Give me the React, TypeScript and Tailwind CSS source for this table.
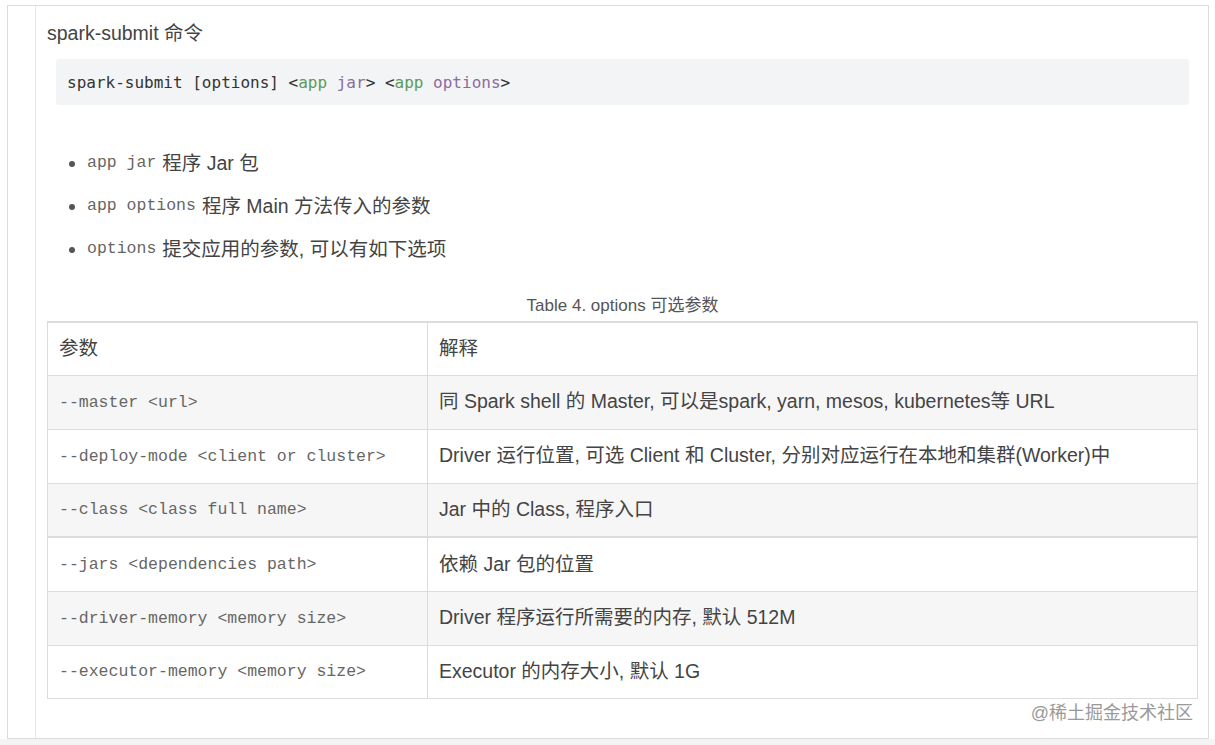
import React from "react";

const sans = "font-['Liberation_Sans','Noto_Sans_CJK_SC',sans-serif]";
const mono = "font-['Liberation_Mono','Noto_Sans_CJK_SC',monospace]";

const rows: [string, string][] = [
  ["--master <url>", "同 Spark shell 的 Master, 可以是spark, yarn, mesos, kubernetes等 URL"],
  ["--deploy-mode <client or cluster>", "Driver 运行位置, 可选 Client 和 Cluster, 分别对应运行在本地和集群(Worker)中"],
  ["--class <class full name>", "Jar 中的 Class, 程序入口"],
  ["--jars <dependencies path>", "依赖 Jar 包的位置"],
  ["--driver-memory <memory size>", "Driver 程序运行所需要的内存, 默认 512M"],
  ["--executor-memory <memory size>", "Executor 的内存大小, 默认 1G"],
];

function Bullet({ code, text }: { code: string; text: string }) {
  return (
    <li className="flex items-center h-[43px]">
      <span className="w-[6px] h-[6px] rounded-full bg-[#555] ml-[22px] mr-[12px]" />
      <span className={`${mono} text-[16.5px] text-[#666]`}>{code}</span>
      <span className="ml-[6px] text-[19.5px] text-[#444]">{text}</span>
    </li>
  );
}

export default function App() {
  return (
    <div className={`w-[1215px] h-[745px] bg-white flex flex-col ${sans}`}>
      <div className="pt-[5px] pl-[7px] pr-[6px]">
        <div className="border border-[#dcdcdc] h-[734px] flex relative">
          <div className="w-[28px] border-r border-[#e6e6e6]" />
          <div className="flex-1 pl-[11px] pr-[10px] pt-[13px]">
            <div className="text-[19.5px] leading-[28px] text-[#444]">spark-submit 命令</div>
            <div className="mt-[12px] ml-[9px] mr-[9px] h-[46px] rounded-[3px] bg-[#f3f4f5] flex items-center pl-[11px] pt-[1px]">
              <span className="font-['DejaVu_Sans_Mono',monospace] text-[16px] text-[#333]">
                spark-submit [options] &lt;<span className="text-[#5b9a5b]">app</span>{" "}
                <span className="text-[#8b6d9c]">jar</span>&gt; &lt;<span className="text-[#5b9a5b]">app</span>{" "}
                <span className="text-[#8b6d9c]">options</span>&gt;
              </span>
            </div>
            <ul className="mt-[37px]">
              <Bullet code="app jar" text="程序 Jar 包" />
              <Bullet code="app options" text="程序 Main 方法传入的参数" />
              <Bullet code="options" text="提交应用的参数, 可以有如下选项" />
            </ul>
            <div className="mt-[23px] h-[24px] leading-[24px] text-center text-[17px] text-[#555]">
              Table 4. options 可选参数
            </div>
            <table className="mt-[3px] w-full table-fixed border-collapse border-t-2 border-[#dcdcdc]">
              <colgroup>
                <col className="w-[380px]" />
                <col />
              </colgroup>
              <thead>
                <tr className="h-[53px]">
                  <th className="border border-[#dcdcdc] text-left font-normal pl-[11px] text-[19.5px] text-[#444]">参数</th>
                  <th className="border border-[#dcdcdc] text-left font-normal pl-[11px] text-[19.5px] text-[#444]">解释</th>
                </tr>
              </thead>
              <tbody>
                {rows.map(([a, b], i) => (
                  <tr
                    key={i}
                    className={`${i === 5 ? "h-[53px]" : "h-[54px]"} ${i % 2 === 0 ? "bg-[#f6f6f6]" : "bg-white"} ${i === 3 ? "border-t-2 border-[#dcdcdc]" : ""}`}
                  >
                    <td className={`border border-[#dcdcdc] pl-[11px] pt-[2px] ${mono} text-[16.5px] text-[#666] whitespace-pre`}>{a}</td>
                    <td className="border border-[#dcdcdc] pl-[11px] text-[19.5px] text-[#444] whitespace-nowrap">{b}</td>
                  </tr>
                ))}
              </tbody>
            </table>
          </div>
          <div className="absolute right-[15px] bottom-[11px] text-[18px] text-[#9a9a9a]">@稀土掘金技术社区</div>
        </div>
      </div>
      <div className="flex-1 bg-[#f4f4f4]" />
    </div>
  );
}
